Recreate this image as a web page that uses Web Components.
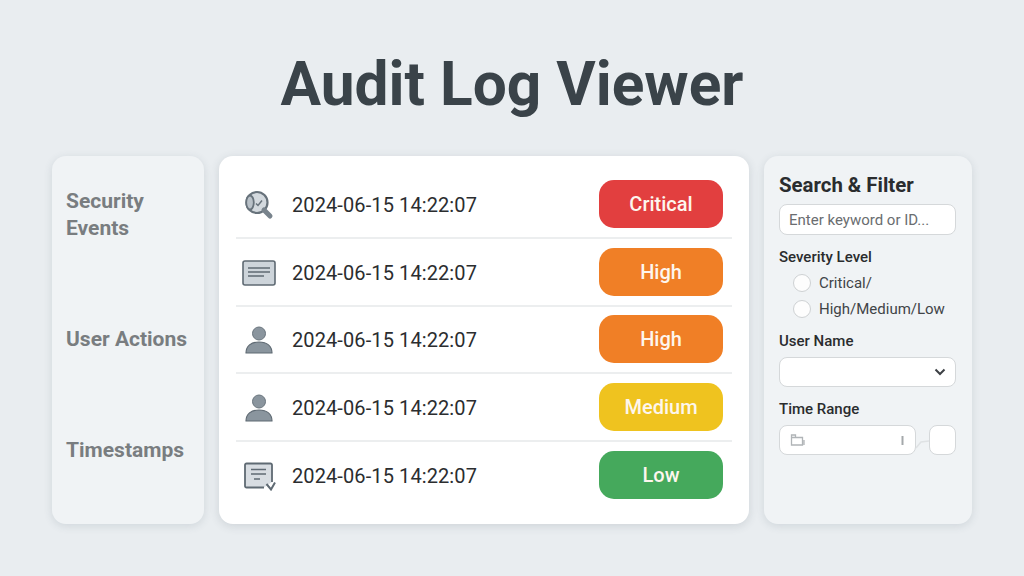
<!DOCTYPE html>
<html>
<head>
<meta charset="utf-8">
<title>Audit Log Viewer</title>
<style>
  html, body { margin: 0; height: 100%; }
  body {
    width: 1024px; height: 576px; overflow: hidden;
    background: #e9edf0;
    font-family: Roboto, "Liberation Sans", sans-serif;
    display: flex; flex-direction: column; align-items: center;
  }
</style>
</head>
<body>
<audit-viewer>
  <audit-side slot="side"></audit-side>
  <log-table slot="main">
    <log-row icon="search" severity="critical">2024-06-15 14:22:07</log-row>
    <log-row icon="card" severity="high">2024-06-15 14:22:07</log-row>
    <log-row icon="user" severity="high">2024-06-15 14:22:07</log-row>
    <log-row icon="user" severity="medium">2024-06-15 14:22:07</log-row>
    <log-row icon="note" severity="low">2024-06-15 14:22:07</log-row>
  </log-table>
  <filter-panel slot="filter"></filter-panel>
</audit-viewer>

<script>
class AuditViewer extends HTMLElement {
  connectedCallback() {
    this.attachShadow({ mode: 'open' });
    this.shadowRoot.innerHTML = `
      <style>
        :host { display: block; width: 1024px; height: 576px; }
        h1 {
          margin: 0; height: 156px; box-sizing: border-box; padding-top: 50px;
          text-align: center; font-size: 60.4px; line-height: 70px; font-weight: 700;
          color: #3a4349;
        }
        .cols {
          display: grid; grid-template-columns: 152px 530px 208px; grid-template-rows: 368px; column-gap: 15px;
          padding-left: 52px;
        }
      </style>
      <h1>Audit Log Viewer</h1>
      <div class="cols">
        <slot name="side"></slot>
        <slot name="main"></slot>
        <slot name="filter"></slot>
      </div>`;
  }
}

class AuditSide extends HTMLElement {
  connectedCallback() {
    this.attachShadow({ mode: 'open' });
    this.shadowRoot.innerHTML = `
      <style>
        :host {
          display: block; box-sizing: border-box; padding: 32px 14px 0;
          background: #f0f3f5; border-radius: 14px;
          box-shadow: 0 2px 8px rgba(60, 75, 90, .14);
          color: #797d80; font-size: 21px; font-weight: 700; line-height: 27px;
        }
        div { margin-bottom: 84px; }
        div:first-child { margin-bottom: 71px; }
      </style>
      <div>Security<br>Events</div>
      <div>User Actions</div>
      <div>Timestamps</div>`;
  }
}

class LogTable extends HTMLElement {
  connectedCallback() {
    this.attachShadow({ mode: 'open' });
    this.shadowRoot.innerHTML = `
      <style>
        :host {
          display: block; box-sizing: border-box; padding: 15px 17px 0;
          background: #fff; border-radius: 14px;
          box-shadow: 0 2px 10px rgba(60, 75, 90, .16);
        }
      </style>
      <slot></slot>`;
  }
}

const ICONS = {
  search: `<circle cx="15" cy="12.500" r="10.500" fill="#d3d9de" stroke="#67727b" stroke-width="2.200"/>
    <ellipse cx="8" cy="12.500" rx="3.800" ry="7" fill="#b9c1c8" stroke="#67727b" stroke-width="1.800"/>
    <path d="M14 13.500l2 2 4-5" fill="none" stroke="#67727b" stroke-width="1.500"/>
    <path d="M22 20l6 6" stroke="#78838c" stroke-width="5" stroke-linecap="round"/>`,
  card: `<rect x="1" y="3" width="32" height="24" rx="2" fill="#cdd4da" stroke="#5f6a73" stroke-width="1.600"/>
    <path d="M6 10h22M6 14h22M6 18h16" stroke="#5f6a73" stroke-width="1.300"/>`,
  user: `<circle cx="17" cy="8.500" r="6.500" fill="#8a959e" stroke="#69747d" stroke-width="1"/>
    <path d="M4 28c0-7 5-11 13-11s13 4 13 11z" fill="#8a959e" stroke="#5f6a73" stroke-width="1.200" stroke-linejoin="round"/>`,
  note: `<path d="M30 21V4a1.500 1.500 0 0 0-1.500-1.500H4.500A1.500 1.500 0 0 0 3 4v21a1.500 1.500 0 0 0 1.500 1.500H22" fill="#d8dde2" stroke="#5f6a73" stroke-width="1.800"/>
    <path d="M9 8.500h15M9 13h15M12 18h6" stroke="#5f6a73" stroke-width="1.600"/>
    <path d="M24.500 23l4.500 5.500 4-7" fill="none" stroke="#5f6a73" stroke-width="2"/>`
};
const SEVERITY = {
  critical: ['Critical', '#e23f3f'],
  high: ['High', '#f07f26'],
  medium: ['Medium', '#efc31f'],
  low: ['Low', '#45a95c']
};

class LogRow extends HTMLElement {
  connectedCallback() {
    const [label, color] = SEVERITY[this.getAttribute('severity')];
    this.attachShadow({ mode: 'open' });
    this.shadowRoot.innerHTML = `
      <style>
        :host {
          display: flex; align-items: center; height: 67.75px; box-sizing: border-box;
          border-bottom: 2px solid #eceeef; padding: 2px 9px 0 6px;
        }
        :host(:last-child) { border-bottom-color: transparent; }
        svg { width: 34px; height: 30px; flex: none; }
        .time { margin-left: 16px; flex: 1; font-size: 20px; color: #2b2d2f; letter-spacing: .1px; }
        .badge {
          width: 124px; height: 48px; margin-bottom: 2px; border-radius: 15px; background: ${color};
          color: #fdf6ee; font-size: 20px; font-weight: 500; line-height: 48px; text-align: center;
        }
      </style>
      <svg viewBox="0 0 34 30">${ICONS[this.getAttribute('icon')]}</svg>
      <span class="time"><slot></slot></span>
      <span class="badge">${label}</span>`;
  }
}

class FilterPanel extends HTMLElement {
  connectedCallback() {
    this.attachShadow({ mode: 'open' });
    this.shadowRoot.innerHTML = `
      <style>
        :host {
          display: block; box-sizing: border-box; padding: 16px 16px 0 15px;
          background: #f0f3f5; border-radius: 14px;
          box-shadow: 0 2px 8px rgba(60, 75, 90, .14);
          color: #2a2c2e;
        }
        h2 { margin: 0 0 6px; font-size: 20.400px; line-height: 26px; font-weight: 700; }
        h3 { margin: 0; font-size: 15px; line-height: 18px; font-weight: 500; }
        .box {
          box-sizing: border-box; height: 30px; background: #fff;
          border: 1.500px solid #d5d8da; border-radius: 8px;
          display: flex; align-items: center;
        }
        .kw { height: 31px; padding-left: 9px; color: #6a6d70; font-size: 15px; margin-bottom: 13px; }
        .radio { display: flex; align-items: center; height: 26px; padding-left: 14px; font-size: 15px; color: #414447; }
        .radio i {
          width: 18px; height: 18px; box-sizing: border-box; margin-right: 8px;
          background: #fdfdfd; border: 1.500px solid #ced1d3; border-radius: 50%;
        }
        .radios { margin: 4px 0 10px; }
        .sel { justify-content: flex-end; padding-right: 9px; margin: 7px 0 13px; }
        .range { display: flex; align-items: center; margin-top: 7px; }
        .range .date { width: 137px; flex: none; justify-content: space-between; padding: 0 11px 0 10px; }
        .range .end { width: 27px; flex: none; }
        .link { width: 13px; height: 30px; flex: none; }
      </style>
      <h2>Search &amp; Filter</h2>
      <div class="box kw">Enter keyword or ID...</div>
      <h3>Severity Level</h3>
      <div class="radios">
        <div class="radio"><i></i>Critical/</div>
        <div class="radio"><i></i>High/Medium/Low</div>
      </div>
      <h3>User Name</h3>
      <div class="box sel">
        <svg width="12" height="8" viewBox="0 0 12 8"><path d="M1.500 1.500L6 6l4.500-4.500" fill="none" stroke="#3d4145" stroke-width="2"/></svg>
      </div>
      <h3>Time Range</h3>
      <div class="range">
        <div class="box date">
          <svg width="15" height="13" viewBox="0 0 15 13"><path d="M1.500 1h4v2.500h7V11H1.500zM1.500 3.500h4M14 6v5" fill="none" stroke="#b0b4b7" stroke-width="1.300"/></svg>
          <svg width="3" height="9" viewBox="0 0 3 9"><path d="M1.500 0v9" stroke="#a4a8ab" stroke-width="2"/></svg>
        </div>
        <svg class="link" viewBox="0 0 13 30"><path d="M0 23l5-6 8-1" fill="none" stroke="#dfe2e4" stroke-width="1.500"/></svg>
        <div class="box end"></div>
      </div>`;
  }
}

customElements.define('audit-viewer', AuditViewer);
customElements.define('audit-side', AuditSide);
customElements.define('log-table', LogTable);
customElements.define('log-row', LogRow);
customElements.define('filter-panel', FilterPanel);
</script>
</body>
</html>
